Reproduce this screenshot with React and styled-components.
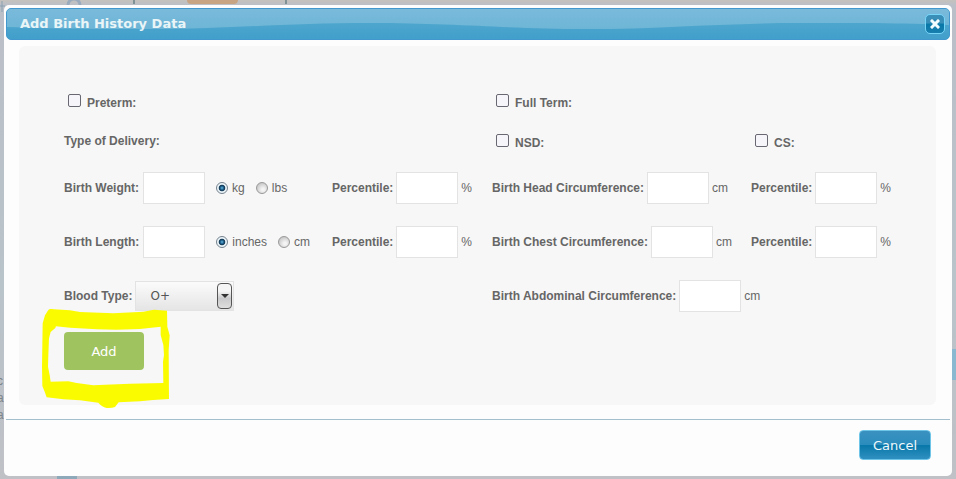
import React from "react";
import styled, { createGlobalStyle } from "styled-components";

const Global = createGlobalStyle`
  * { box-sizing: border-box; }
  body {
    margin: 0;
    font: 12px/16px "Liberation Sans", Arial, sans-serif;
    color: #666;
  }
`;

const Page = styled.div`
  position: relative;
  min-height: 100vh;
  padding: 5px 4px 3px;
  display: flex;
  background: linear-gradient(#c5c2bd 0, #bbbfc8 5px, #b9c3ca 60%, #bfc1c6);
  overflow: hidden;
`;

const Backdrop = styled.svg`
  position: absolute;
  inset: 0;
  width: 100%;
  height: 100%;
`;

const SideText = styled.div`
  position: absolute;
  left: -3px;
  top: 373px;
  line-height: 17px;
  color: #7d858a;
`;

const Dialog = styled.section`
  position: relative;
  flex: 1;
  display: flex;
  flex-direction: column;
  padding: 3px 2px;
  background: #fdfdfd;
  border-radius: 5px;
`;

const Header = styled.header`
  position: relative;
  display: flex;
  align-items: center;
  justify-content: space-between;
  height: 32px;
  padding: 0 4px 0 13px;
  border: 1px solid #4297cf;
  border-radius: 5px;
  overflow: hidden;
  background: #43a0c9;
`;

const Gloss = styled.svg`
  position: absolute;
  inset: 0;
  width: 100%;
  height: 100%;
`;

const Title = styled.h1`
  position: relative;
  margin: 0;
  font: bold 13px/18px "DejaVu Sans", Verdana, sans-serif;
  color: #eaf5f7;
`;

const CloseButton = styled.button`
  position: relative;
  display: flex;
  align-items: center;
  justify-content: center;
  width: 20px;
  height: 20px;
  padding: 0;
  border: 1px solid #77d5f7;
  border-radius: 5px;
  background: linear-gradient(#3a8fb9 45%, #0778a8 50%, #197fae);
`;

const Panel = styled.form`
  margin: 6px 14px 14px 13px;
  padding: 35px 0 35px 45px;
  background: #f7f7f7;
  border-radius: 6px;
`;

const Fields = styled.div`
  display: grid;
  grid-template-columns: minmax(0, 268fr) minmax(0, 160fr) minmax(0, 259fr) minmax(0, 185fr);
  grid-template-rows: 40px 40px 54px 54px 54px;
  align-items: center;
  white-space: nowrap;
`;

const Cell = styled.div`
  grid-column: ${(p) => p.$col};
  grid-row: ${(p) => p.$row};
  display: flex;
  align-items: center;
  gap: ${(p) => p.$gap || 3}px;
`;

const Label = styled.label`
  font-weight: bold;
`;

const GroupLabel = styled.span`
  font-weight: bold;
`;

const CheckCell = styled.div`
  grid-column: ${(p) => p.$col};
  grid-row: ${(p) => p.$row};
  display: flex;
  align-items: baseline;
  gap: 6px;
  padding: 2px 0 0 4px;
`;

const Check = styled.input.attrs({ type: "checkbox" })`
  appearance: none;
  width: 13px;
  height: 13px;
  margin: 0;
  border: 1px solid #686872;
  border-radius: 2px;
  background: #f6f6fa;
  &:checked { background: #2a7fae; }
`;

const NumberBox = styled.input.attrs({ type: "text" })`
  width: 62px;
  height: 32px;
  padding: 0 6px;
  border: 1px solid #e3e3e3;
  background: #fff;
  font: inherit;
  color: inherit;
`;

const Unit = styled.span``;

const Choices = styled.div`
  display: flex;
  gap: 11px;
  margin-left: 7px;
`;

const Choice = styled.label`
  display: flex;
  align-items: center;
  gap: 4px;
`;

const Radio = styled.input.attrs({ type: "radio" })`
  appearance: none;
  width: 12px;
  height: 12px;
  margin: 0;
  border: 1px solid #999;
  border-radius: 50%;
  background: radial-gradient(circle at 60% 65%, #f4f4f4 15%, #c4c4c6 80%);
  &:checked {
    border-color: #74818c;
    background: radial-gradient(circle, #67bce4 0, #1b5c88 25%, #12354f 40%, #e5f1f7 52%, #fff);
  }
`;

const SelectWrap = styled.div`
  position: relative;
  display: flex;
`;

const Select = styled.select`
  appearance: none;
  width: 99px;
  height: 30px;
  padding: 0 24px 0 14px;
  border: 1px solid #e3e3e3;
  border-radius: 0;
  background: linear-gradient(#fbfbfb, #e5e5e5);
  font: 12px "DejaVu Sans", Verdana, sans-serif;
  color: #555;
`;

const SelectArrow = styled.span`
  position: absolute;
  top: 2px;
  right: 2px;
  display: flex;
  align-items: center;
  justify-content: center;
  width: 15px;
  height: 26px;
  border: 1px solid #555;
  border-radius: 4px;
  background: linear-gradient(#f5f5f5 30%, #c9c9cb 60%, #dedede);
  pointer-events: none;
`;

const Actions = styled.div`
  display: flex;
  margin-top: 9px;
`;

const Highlighted = styled.div`
  position: relative;
  display: flex;
`;

const Marker = styled.svg`
  position: absolute;
  left: -22px;
  top: -23px;
  width: 128px;
  height: 100px;
  pointer-events: none;
`;

const AddButton = styled.button`
  width: 80px;
  height: 38px;
  padding: 0;
  border: 0;
  border-radius: 4px;
  background: #9fc45f;
  font: 13px "DejaVu Sans", Verdana, sans-serif;
  color: #fff;
`;

const Footer = styled.footer`
  display: flex;
  justify-content: flex-end;
  padding: 10px 19px 13px;
  border-top: 1px solid #a3bfce;
`;

const CancelButton = styled.button`
  width: 72px;
  height: 30px;
  padding: 0;
  border: 1px solid #6fc5e8;
  border-radius: 4px;
  background: linear-gradient(#3a91c0 0, #2b8dbd 49%, #0877a9 50%, #2f90c0);
  font: 13px "DejaVu Sans", Verdana, sans-serif;
  color: #eef8fb;
`;

function Measure({ id, col, row, label, unit, gap, options, group }) {
  return (
    <Cell $col={col} $row={row} $gap={gap}>
      <Label htmlFor={id}>{label}</Label>
      <NumberBox id={id} />
      {unit && <Unit>{unit}</Unit>}
      {options && (
        <Choices role="radiogroup" aria-label={label}>
          {options.map((o, i) => (
            <Choice key={o}>
              <Radio name={group} value={o} defaultChecked={i === 0} />
              {o}
            </Choice>
          ))}
        </Choices>
      )}
    </Cell>
  );
}

function CheckField({ id, col, row, label }) {
  return (
    <CheckCell $col={col} $row={row}>
      <Check id={id} />
      <Label htmlFor={id}>{label}</Label>
    </CheckCell>
  );
}

export default function App() {
  return (
    <>
      <Global />
      <Page>
        <Backdrop aria-hidden="true">
          <path d="M187 0H238V1Q237 4 234 4H191Q187 4 187 0Z" fill="#c7a584" />
          <path d="M134 0V4M286 0V4" stroke="#7f9195" strokeWidth="2" />
          <circle cx="74" cy="5" r="6" fill="none" stroke="#9aabbe" strokeWidth="3" />
          <path d="M0 6H5M2 1V12" stroke="#8ba2b1" />
          <rect x="952" y="349" width="10" height="31" fill="#89b8d0" />
          <rect x="57" y="476" width="20" height="3" fill="#8da9ba" />
        </Backdrop>
        <SideText aria-hidden="true">c<br />a<br />a</SideText>
        <Dialog role="dialog" aria-labelledby="dialog-title">
          <Header>
            <Gloss viewBox="0 0 942 30" preserveAspectRatio="none" aria-hidden="true">
              <defs>
                <linearGradient id="gloss" x1="0" y1="0" x2="0" y2="1">
                  <stop offset="0" stopColor="#7abadb" />
                  <stop offset="1" stopColor="#6db5d6" />
                </linearGradient>
                <linearGradient id="base" x1="0" y1="0" x2="0" y2="1">
                  <stop offset="0.4" stopColor="#4fa7ce" />
                  <stop offset="1" stopColor="#419fca" />
                </linearGradient>
              </defs>
              <rect width="942" height="30" fill="url(#base)" />
              <path
                d="M0 0H942V16C900 14 840 14 793 14C715 14 655 20 580 20C500 20 450 14 363 14C280 14 220 20 150 20C90 20 50 20 0 18Z"
                fill="url(#gloss)"
              />
            </Gloss>
            <Title id="dialog-title">Add Birth History Data</Title>
            <CloseButton type="button" aria-label="Close">
              <svg width="10" height="10" viewBox="0 0 10 10">
                <path d="M2 2L8 8M8 2L2 8" stroke="#f3fdff" strokeWidth="3" strokeLinecap="square" />
                <path d="M0 5H2M8 5H10M5 0V2M5 8V10" stroke="#1f83b1" strokeWidth="1" />
              </svg>
            </CloseButton>
          </Header>

          <Panel onSubmit={(e) => e.preventDefault()}>
            <Fields>
              <CheckField id="preterm" col={1} row={1} label="Preterm:" />
              <CheckField id="fullterm" col={3} row={1} label="Full Term:" />

              <Cell $col={1} $row={2}>
                <GroupLabel>Type of Delivery:</GroupLabel>
              </Cell>
              <CheckField id="nsd" col={3} row={2} label="NSD:" />
              <CheckField id="cs" col={4} row={2} label="CS:" />

              <Measure id="weight" col={1} row={3} gap={4} label="Birth Weight:" group="weight-unit" options={["kg", "lbs"]} />
              <Measure id="weight-pct" col={2} row={3} label="Percentile:" unit="%" />
              <Measure id="head" col={3} row={3} label="Birth Head Circumference:" unit="cm" />
              <Measure id="head-pct" col={4} row={3} label="Percentile:" unit="%" />

              <Measure id="length" col={1} row={4} gap={4} label="Birth Length:" group="length-unit" options={["inches", "cm"]} />
              <Measure id="length-pct" col={2} row={4} label="Percentile:" unit="%" />
              <Measure id="chest" col={3} row={4} label="Birth Chest Circumference:" unit="cm" />
              <Measure id="chest-pct" col={4} row={4} label="Percentile:" unit="%" />

              <Cell $col={1} $row={5} $gap={3}>
                <Label htmlFor="blood">Blood Type:</Label>
                <SelectWrap>
                  <Select id="blood" defaultValue="O+">
                    <option>O+</option>
                  </Select>
                  <SelectArrow aria-hidden="true">
                    <svg width="8" height="4" viewBox="0 0 8 4">
                      <path d="M0 0H8L4 4Z" fill="#333" />
                    </svg>
                  </SelectArrow>
                </SelectWrap>
              </Cell>
              <Measure id="abdominal" col={3} row={5} label="Birth Abdominal Circumference:" unit="cm" />
            </Fields>
            <Actions>
              <Highlighted>
                <AddButton type="submit">Add</AddButton>
                <Marker viewBox="36 297 384 300" aria-hidden="true">
                  <path
                    fill="#fbfb00"
                    fillRule="evenodd"
                    d="M55 300Q60 295 72 298L120 301L150 306L250 310L340 305L372 299L411 302L412 350L419 376L416 420L417 567L370 570L330 574L266 577L255 591Q245 595 230 594Q214 590 205 578L150 571L100 568L50 562L44 545L37 528L36 470L38 340L45 316Z
                    M78 349L120 353L200 358L260 359L330 357L392 350L392 375L400 405L402 435L399 455L400 519L300 521L225 524L190 526L140 519L115 514L62 515L59 495L54 470L55 435L57 385L62 366L76 354Z"
                  />
                </Marker>
              </Highlighted>
            </Actions>
          </Panel>

          <Footer>
            <CancelButton type="button">Cancel</CancelButton>
          </Footer>
        </Dialog>
      </Page>
    </>
  );
}
